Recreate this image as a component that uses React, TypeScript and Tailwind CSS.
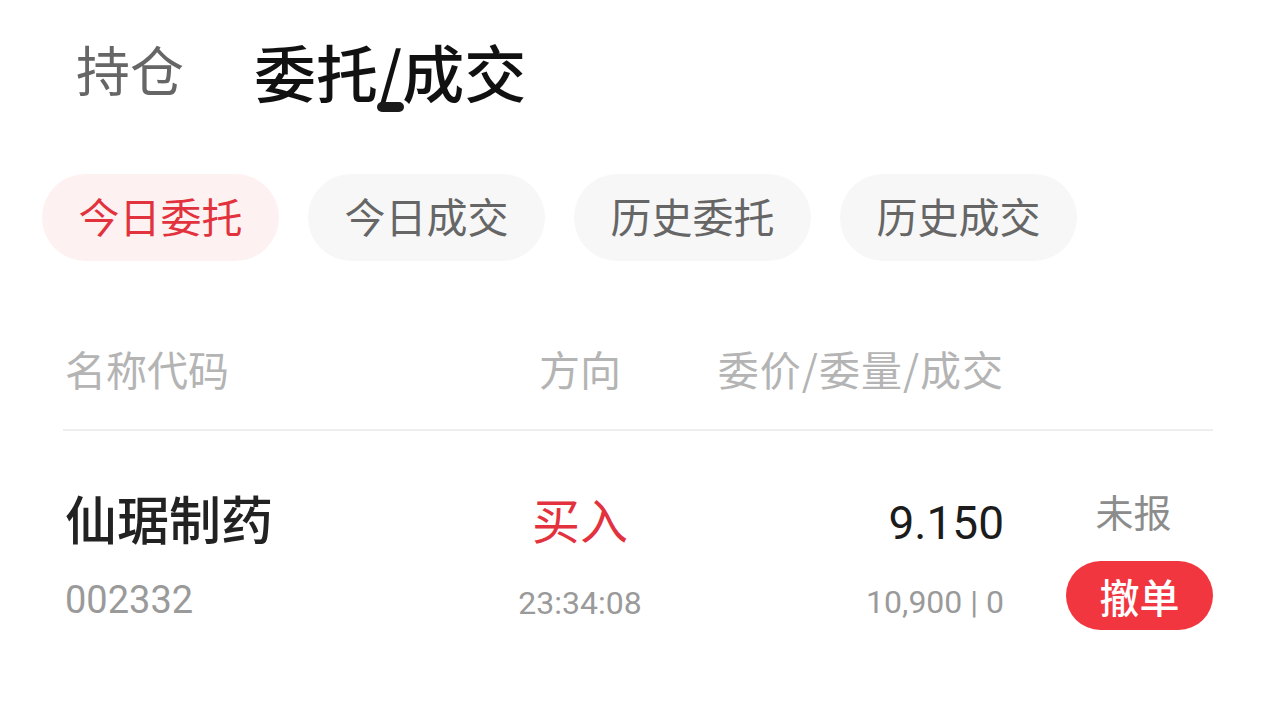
const cjk = "font-['Noto_Sans_CJK_SC','Noto_Sans',sans-serif]";
const num = "font-['Roboto','Noto_Sans_CJK_SC',sans-serif]";

const filters = ["今日委托", "今日成交", "历史委托", "历史成交"];

export default function App() {
  return (
    <main className={`min-h-screen w-full bg-white ${cjk}`}>
      {/* top tabs */}
      <div className="flex h-[140px] items-start gap-[70px] pl-[76px] pt-[40px]">
        <span className="mt-[2px] text-[54px] leading-none text-[#666666]">持仓</span>
        <div className="flex flex-col items-center">
          <span className="text-[62px] font-medium leading-none text-[#111111]">委托/成交</span>
          <span className="h-[10px] w-[27px] rounded-full bg-[#1a1a1a]" />
        </div>
      </div>

      {/* filter chips */}
      <div className="mt-[34px] flex gap-[29px] pl-[42px]">
        {filters.map((f, i) => (
          <button
            key={f}
            className={
              i === 0
                ? "flex h-[87px] w-[237px] items-center justify-center rounded-full bg-[#fdf2f1] pb-[4px] text-[41px] leading-none text-[#e2323d]"
                : "flex h-[87px] w-[237px] items-center justify-center rounded-full bg-[#f7f7f7] pb-[4px] text-[41px] leading-none text-[#666666]"
            }
          >
            {f}
          </button>
        ))}
      </div>

      <section className="mx-[63px]">
        {/* table header */}
        <div className="grid h-[170px] grid-cols-[407px_220px_314px_62px_147px] items-center border-b-2 border-[#eeeeee] pt-[46px] text-[41px] leading-none text-[#b4b4b4]">
          <span className="pl-[2px]">名称代码</span>
          <span className="text-center">方向</span>
          <span className="text-right tracking-[1px]">委价/委量/成交</span>
          <span />
          <span />
        </div>

        {/* order row */}
        <div className="grid grid-cols-[407px_220px_314px_62px_147px] pt-[61px]">
          <div className="flex flex-col pl-[2px]">
            <span className="text-[52px] font-medium leading-none text-[#222222]">仙琚制药</span>
            <span className={`${num} mt-[37px] text-[38px] leading-none text-[#9a9a9a]`}>002332</span>
          </div>
          <div className="flex flex-col items-center pt-[2px]">
            <span className="text-[48px] leading-none text-[#e3323e]">买入</span>
            <span className={`${num} mt-[45px] text-[32px] leading-none text-[#9a9a9a]`}>23:34:08</span>
          </div>
          <div className="flex flex-col items-end pt-[8px]">
            <span className={`${num} text-[46px] leading-none text-[#1c1c1c]`}>9.150</span>
            <span className={`${num} mt-[40px] text-[32px] leading-none text-[#9a9a9a]`}>10,900 | 0</span>
          </div>
          <span />
          <div className="flex flex-col items-center">
            <span className="pr-[12px] text-[38px] leading-none text-[#8c8c8c]">未报</span>
            <button className="mt-[31px] flex h-[69px] w-[147px] items-center justify-center rounded-full bg-[#f1363f] text-[40px] font-medium leading-none text-white">
              撤单
            </button>
          </div>
        </div>
      </section>
    </main>
  );
}
